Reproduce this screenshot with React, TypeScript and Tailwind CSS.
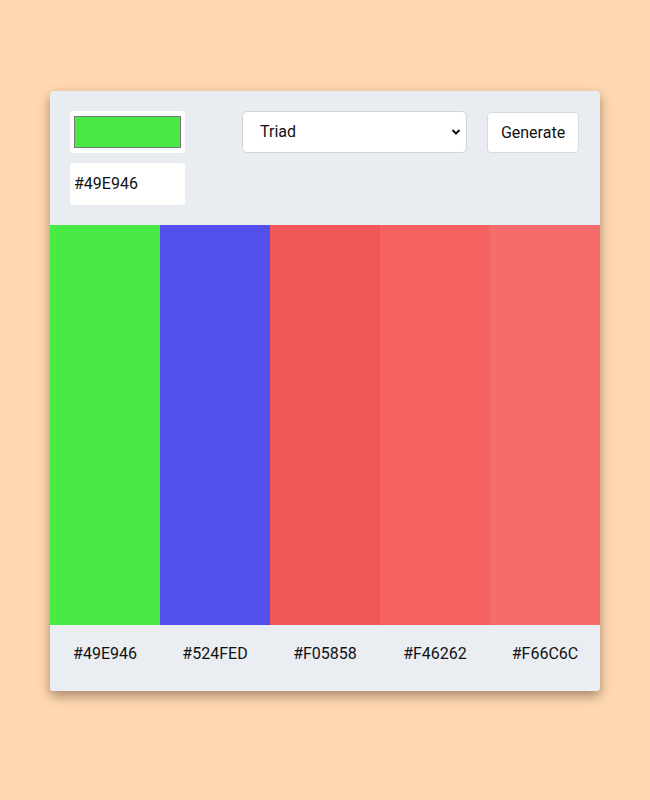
const colors = ["#49E946", "#524FED", "#F05858", "#F46262", "#F66C6C"];

export default function App() {
  return (
    <div className="min-h-[800px] w-full bg-[#ffd8b1] pt-[91px] font-['Roboto',sans-serif] text-[#111]">
      <div className="mx-auto w-[550px] overflow-hidden rounded-[4px] bg-[#e9edf1] shadow-[0_5px_12px_rgba(60,40,20,0.45)]">
        <div className="flex h-[134px] items-start px-[20px] pt-[20px]">
          <div className="flex w-[115px] flex-col gap-[10px]">
            <div className="flex h-[42px] items-center rounded-[3px] bg-white px-[4px]">
              <div className="h-[32px] w-full border border-[#777] bg-[#49E946]" />
            </div>
            <div className="flex h-[42px] items-center rounded-[3px] bg-white px-[4px] text-[16px]">
              #49E946
            </div>
          </div>
          <div className="ml-[57px] flex h-[42px] w-[225px] items-center justify-between rounded-[5px] border border-[#cfd4d9] bg-white pl-[17px] pr-[5px] text-[16px]">
            <span>Triad</span>
            <svg width="10" height="10" viewBox="0 0 10 10" fill="none">
              <path d="M1.5 3l3.5 3.5L8.5 3" stroke="#111" strokeWidth="2" />
            </svg>
          </div>
          <button
            type="button"
            className="ml-[20px] mt-[1px] h-[41px] w-[92px] rounded-[4px] border border-[#d6dadf] bg-white text-[16px]"
          >
            Generate
          </button>
        </div>
        <div className="flex h-[400px]">
          {colors.map((c) => (
            <div key={c} className="flex-1" style={{ backgroundColor: c }} />
          ))}
        </div>
        <div className="flex h-[66px] items-center bg-[#eaeef2] pb-[8px]">
          {colors.map((c) => (
            <div key={c} className="flex-1 text-center text-[16px]">
              {c}
            </div>
          ))}
        </div>
      </div>
    </div>
  );
}
